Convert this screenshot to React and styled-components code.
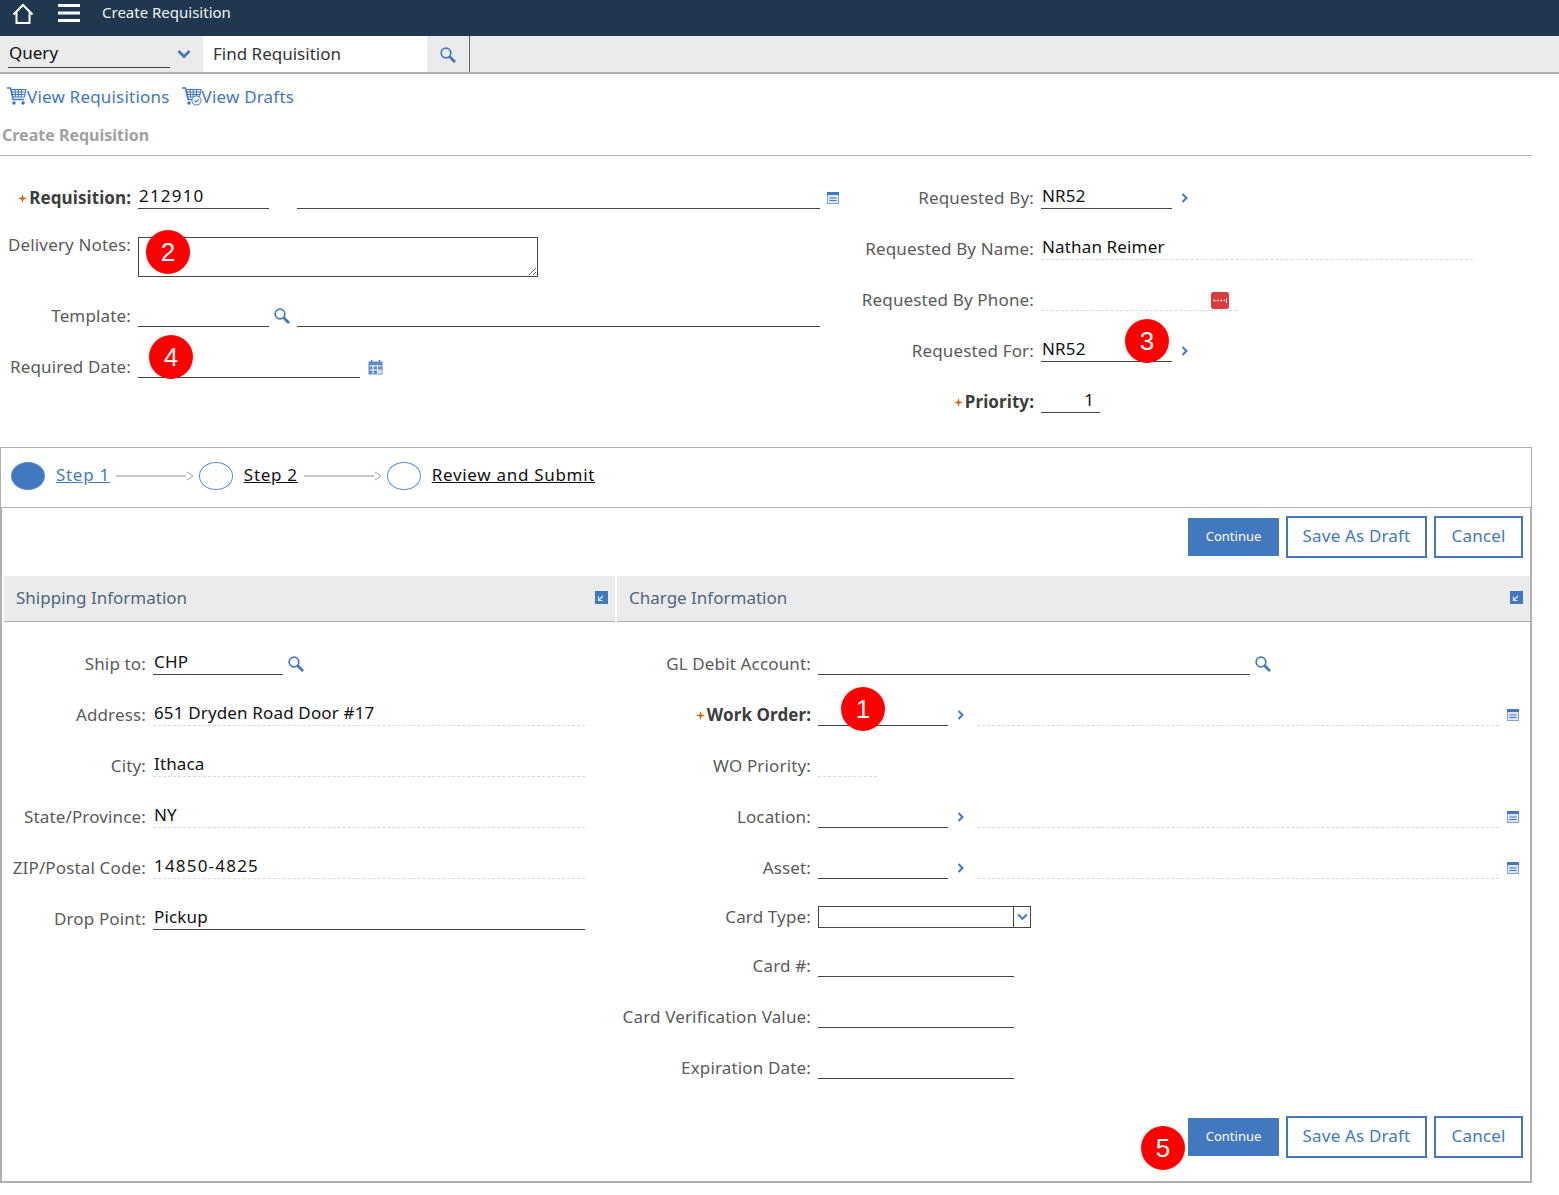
import styled, { createGlobalStyle } from "styled-components";

const BLUE = "#4178be";
const GRAY_LINE = "#b0b0b0";
const INK = "#444";

const GlobalStyle = createGlobalStyle`
  html, body {
    margin: 0;
    padding: 0;
    background: #fff;
  }
  body {
    font-family: "Noto Sans", "Liberation Sans", sans-serif;
    font-size: 17px;
    color: #5a5a5a;
  }
  * {
    box-sizing: border-box;
  }
`;

function SearchIcon() {
  return (
    <svg width="16" height="16" viewBox="0 0 16 16">
      <circle cx="6" cy="6" r="4.8" fill="none" stroke={BLUE} strokeWidth="1.7" />
      <path d="M10 10 L14.2 14.2" stroke={BLUE} strokeWidth="2.8" strokeLinecap="round" />
    </svg>
  );
}

function ChevronRight() {
  return (
    <svg width="8" height="10" viewBox="0 0 8 10">
      <path d="M1.5 1 L5.5 5 L1.5 9" fill="none" stroke={BLUE} strokeWidth="2" />
    </svg>
  );
}

function ChevronDown({ size = 14 }) {
  return (
    <svg width={size} height={size * 0.72} viewBox="0 0 14 10">
      <path d="M1.5 2 L7 7.5 L12.5 2" fill="none" stroke={BLUE} strokeWidth="2.6" />
    </svg>
  );
}

function DetailIcon() {
  return (
    <svg width="12" height="12" viewBox="0 0 12 12">
      <rect x="0.5" y="0.5" width="11" height="11" fill="#dbe6f5" stroke="#7fa3d6" />
      <rect x="0" y="0" width="12" height="3" fill={BLUE} />
      <path d="M2.5 6 H9.5 M2.5 8.5 H9.5" stroke={BLUE} strokeWidth="1" />
    </svg>
  );
}

function CollapseIcon() {
  return (
    <svg width="13" height="13" viewBox="0 0 13 13">
      <rect width="13" height="13" fill={BLUE} />
      <path d="M8 5 L4 9 M3.5 5.5 V9.5 H7.5" fill="none" stroke="#dfe9f6" strokeWidth="1.2" />
    </svg>
  );
}

function CalendarIcon() {
  return (
    <svg width="15" height="15" viewBox="0 0 15 15">
      <path d="M3.5 0 V3 M11.5 0 V3" stroke={BLUE} strokeWidth="1.6" />
      <rect x="0.5" y="1.5" width="14" height="13" fill="#5b8bc9" />
      <path d="M1.5 6 H13.5 M1.5 10 H13.5 M5 5 V14 M9.5 5 V14" stroke="#fff" strokeWidth="1" />
      <circle cx="12" cy="12" r="2" fill="#dbe6f5" />
    </svg>
  );
}

function PhoneIcon() {
  return (
    <svg width="18" height="17" viewBox="0 0 18 17">
      <rect width="18" height="17" rx="2.5" fill="#da3c3c" />
      <path d="M2.5 8.5 H4.3 M5.9 8.5 H7.7 M9.3 8.5 H11.1 M12.7 8.5 H14" stroke="#fff" strokeWidth="1.6" />
      <path d="M15.5 6 V11" stroke="#fff" strokeWidth="1" />
    </svg>
  );
}

function CartIcon({ checked }) {
  return (
    <svg width="20" height="20" viewBox="0 0 20 20">
      <path d="M0 2 H3.4 L6 13.5 H17" fill="none" stroke={BLUE} strokeWidth="1.4" />
      <path
        d="M4.4 3.5 H19 L17.4 11 H6 Z M4.8 6 H18.4 M5.4 8.5 H18 M8 3.5 L8.6 11 M11.2 3.5 V11 M14.6 3.5 L14.2 11"
        fill="none"
        stroke={BLUE}
        strokeWidth="1.1"
      />
      <circle cx="7" cy="17" r="1.8" fill={BLUE} />
      <circle cx="16" cy="17" r="1.8" fill={BLUE} />
      {checked && (
        <>
          <circle cx="14.5" cy="14.5" r="4.6" fill="#fff" stroke={BLUE} strokeWidth="1" />
          <path d="M12.5 14.5 L14 16 L16.8 13" fill="none" stroke={BLUE} strokeWidth="1.1" />
        </>
      )}
    </svg>
  );
}

function HomeIcon() {
  return (
    <svg width="22" height="22" viewBox="0 0 22 22">
      <path
        d="M1.5 11.5 L11 2 L20.5 11.5 M4.5 9.5 V20 H17.5 V9.5"
        fill="none"
        stroke="#fff"
        strokeWidth="2"
      />
    </svg>
  );
}

function MenuIcon() {
  return (
    <svg width="22" height="18" viewBox="0 0 22 18">
      <path d="M0 1.5 H22 M0 9 H22 M0 16.5 H22" stroke="#fff" strokeWidth="3" />
    </svg>
  );
}

function RequiredStar() {
  return (
    <StarMark width="9" height="9" viewBox="0 0 8 8">
      <path d="M4 0 L4.9 3.1 L8 4 L4.9 4.9 L4 8 L3.1 4.9 L0 4 L3.1 3.1 Z" fill="#e8590c" />
    </StarMark>
  );
}

function FormLabel({ children, width, required, raised }) {
  return (
    <Label $width={width} $required={required} $raised={raised}>
      {required && <RequiredStar />}
      {children}:
    </Label>
  );
}

function StepBar() {
  return (
    <Steps>
      <StepDot $active />
      <StepLink $active>Step 1</StepLink>
      <StepArrow />
      <StepDot />
      <StepLink>Step 2</StepLink>
      <StepArrow />
      <StepDot />
      <StepLink>Review and Submit</StepLink>
    </Steps>
  );
}

function StepArrow() {
  return (
    <svg width="78" height="10" viewBox="0 0 78 10">
      <path d="M0 5 H70" stroke="#8d8d8d" strokeWidth="1" />
      <path d="M71 1 L77 5 L71 9" fill="none" stroke="#a89f96" strokeWidth="1" />
    </svg>
  );
}

function ActionButtons() {
  return (
    <>
      <PrimaryButton>Continue</PrimaryButton>
      <OutlineButton $width={141}>Save As Draft</OutlineButton>
      <OutlineButton $width={89}>Cancel</OutlineButton>
    </>
  );
}

const TOP_LEFT = 131;
const TOP_RIGHT = 184;
const SHIP = 142;
const CHARGE = 194;

export default function App() {
  return (
    <Page>
      <GlobalStyle />
      <TopBar>
        <HomeButton>
          <HomeIcon />
        </HomeButton>
        <MenuButton>
          <MenuIcon />
        </MenuButton>
        <TopTitle>Create Requisition</TopTitle>
      </TopBar>

      <QueryBar>
        <QuerySelect>Query</QuerySelect>
        <QueryChevron>
          <ChevronDown />
        </QueryChevron>
        <FindInput>Find Requisition</FindInput>
        <FindButton>
          <SearchIcon />
        </FindButton>
      </QueryBar>

      <LinkRow>
        <NavLink>
          <CartIcon />
          View Requisitions
        </NavLink>
        <NavLink>
          <CartIcon checked />
          View Drafts
        </NavLink>
      </LinkRow>

      <PageHeading>Create Requisition</PageHeading>

      <TopForm>
        <div>
          <Row>
            <FormLabel width={TOP_LEFT} required>Requisition</FormLabel>
            <Field $width={131} $numeric>212910</Field>
            <Field $width={523} $gap={28} />
            <IconSlot $gap={7}>
              <DetailIcon />
            </IconSlot>
          </Row>
          <Row $height={67} $pad={13}>
            <FormLabel width={TOP_LEFT} raised>Delivery Notes</FormLabel>
            <NotesWrap>
              <Notes readOnly />
              <Badge $left={8} $top={-7}>2</Badge>
            </NotesWrap>
          </Row>
          <Row>
            <FormLabel width={TOP_LEFT}>Template</FormLabel>
            <Field $width={131} />
            <IconSlot $gap={5}>
              <SearchIcon />
            </IconSlot>
            <Field $width={523} $gap={7} />
          </Row>
          <Row>
            <FormLabel width={TOP_LEFT}>Required Date</FormLabel>
            <Field $width={222}>
              <Badge $left={11} $top={-17}>4</Badge>
            </Field>
            <IconSlot $gap={8}>
              <CalendarIcon />
            </IconSlot>
          </Row>
        </div>
        <div>
          <Row>
            <FormLabel width={TOP_RIGHT}>Requested By</FormLabel>
            <Field $width={131}>NR52</Field>
            <IconSlot $gap={9}>
              <ChevronRight />
            </IconSlot>
          </Row>
          <Row>
            <FormLabel width={TOP_RIGHT}>Requested By Name</FormLabel>
            <Field $width={432} $readOnly>Nathan Reimer</Field>
          </Row>
          <Row>
            <FormLabel width={TOP_RIGHT}>Requested By Phone</FormLabel>
            <Field $width={196} $readOnly>
              <PhoneSlot>
                <PhoneIcon />
              </PhoneSlot>
            </Field>
          </Row>
          <Row>
            <FormLabel width={TOP_RIGHT}>Requested For</FormLabel>
            <Field $width={131}>
              NR52
              <Badge $left={84} $top={-17}>3</Badge>
            </Field>
            <IconSlot $gap={9}>
              <ChevronRight />
            </IconSlot>
          </Row>
          <Row>
            <FormLabel width={TOP_RIGHT} required>Priority</FormLabel>
            <Field $width={59} $alignRight>1</Field>
          </Row>
        </div>
      </TopForm>

      <StepBar />

      <Panel>
        <Toolbar $top={8} $bottom={18}>
          <ActionButtons />
        </Toolbar>

        <Sections>
          <section>
            <SectionHeader>
              <SectionTitle>Shipping Information</SectionTitle>
              <CollapseIcon />
            </SectionHeader>
            <SectionBody>
              <Row>
                <FormLabel width={SHIP}>Ship to</FormLabel>
                <Field $width={130}>CHP</Field>
                <IconSlot $gap={5}>
                  <SearchIcon />
                </IconSlot>
              </Row>
              <Row>
                <FormLabel width={SHIP}>Address</FormLabel>
                <Field $width={432} $readOnly>651 Dryden Road Door #17</Field>
              </Row>
              <Row>
                <FormLabel width={SHIP}>City</FormLabel>
                <Field $width={432} $readOnly>Ithaca</Field>
              </Row>
              <Row>
                <FormLabel width={SHIP}>State/Province</FormLabel>
                <Field $width={432} $readOnly>NY</Field>
              </Row>
              <Row>
                <FormLabel width={SHIP}>ZIP/Postal Code</FormLabel>
                <Field $width={432} $readOnly $numeric>14850-4825</Field>
              </Row>
              <Row>
                <FormLabel width={SHIP}>Drop Point</FormLabel>
                <Field $width={432}>Pickup</Field>
              </Row>
            </SectionBody>
          </section>

          <section>
            <SectionHeader>
              <SectionTitle>Charge Information</SectionTitle>
              <CollapseIcon />
            </SectionHeader>
            <SectionBody>
              <Row>
                <FormLabel width={CHARGE}>GL Debit Account</FormLabel>
                <Field $width={432} />
                <IconSlot $gap={5}>
                  <SearchIcon />
                </IconSlot>
              </Row>
              <Row>
                <FormLabel width={CHARGE} required>Work Order</FormLabel>
                <Field $width={130}>
                  <Badge $left={23} $top={-13}>1</Badge>
                </Field>
                <IconSlot $gap={9}>
                  <ChevronRight />
                </IconSlot>
                <Field $width={522} $readOnly $gap={12} />
                <IconSlot $gap={8}>
                  <DetailIcon />
                </IconSlot>
              </Row>
              <Row>
                <FormLabel width={CHARGE}>WO Priority</FormLabel>
                <Field $width={59} $readOnly />
              </Row>
              <Row>
                <FormLabel width={CHARGE}>Location</FormLabel>
                <Field $width={130} />
                <IconSlot $gap={9}>
                  <ChevronRight />
                </IconSlot>
                <Field $width={522} $readOnly $gap={12} />
                <IconSlot $gap={8}>
                  <DetailIcon />
                </IconSlot>
              </Row>
              <Row>
                <FormLabel width={CHARGE}>Asset</FormLabel>
                <Field $width={130} />
                <IconSlot $gap={9}>
                  <ChevronRight />
                </IconSlot>
                <Field $width={522} $readOnly $gap={12} />
                <IconSlot $gap={8}>
                  <DetailIcon />
                </IconSlot>
              </Row>
              <Row $height={47} $pad={8}>
                <FormLabel width={CHARGE}>Card Type</FormLabel>
                <SelectBox>
                  <SelectArrow>
                    <ChevronDown size={11} />
                  </SelectArrow>
                </SelectBox>
              </Row>
              <Row>
                <FormLabel width={CHARGE}>Card #</FormLabel>
                <Field $width={196} />
              </Row>
              <Row>
                <FormLabel width={CHARGE}>Card Verification Value</FormLabel>
                <Field $width={196} />
              </Row>
              <Row>
                <FormLabel width={CHARGE}>Expiration Date</FormLabel>
                <Field $width={196} />
              </Row>
            </SectionBody>
          </section>
        </Sections>

        <Toolbar $top={22} $bottom={23}>
          <Badge $right={345} $top={32}>5</Badge>
          <ActionButtons />
        </Toolbar>
      </Panel>
    </Page>
  );
}

const Page = styled.div`
  width: 1559px;
  height: 1195px;
  overflow: hidden;
`;

const TopBar = styled.header`
  height: 36px;
  background: #1f384f;
  display: flex;
  align-items: flex-start;
`;

const HomeButton = styled.div`
  margin: 3px 0 0 12px;
  height: 22px;
`;

const MenuButton = styled.div`
  margin: 4px 0 0 24px;
  height: 18px;
`;

const TopTitle = styled.div`
  margin-left: 22px;
  color: #f2f4f6;
  font-size: 15px;
  line-height: 25px;
`;

const QueryBar = styled.div`
  height: 38px;
  background: #ebebeb;
  border-bottom: 2px solid ${GRAY_LINE};
  display: flex;
  align-items: stretch;
  padding-left: 8px;
`;

const QuerySelect = styled.div`
  width: 162px;
  height: 32px;
  border-bottom: 1px solid ${INK};
  color: #111;
  padding-left: 1px;
  line-height: 33px;
`;

const QueryChevron = styled.div`
  width: 33px;
  display: flex;
  align-items: center;
  padding: 1px 0 0 7px;
`;

const FindInput = styled.div`
  width: 224px;
  background: #fff;
  color: #333;
  padding-left: 10px;
  line-height: 36px;
`;

const FindButton = styled.div`
  width: 43px;
  border-right: 1px solid #666;
  display: flex;
  align-items: center;
  padding: 1px 0 0 13px;
`;

const LinkRow = styled.nav`
  display: flex;
  gap: 12px;
  height: 46px;
  padding: 10px 0 0 7px;
`;

const NavLink = styled.a`
  display: flex;
  align-items: center;
  height: 24px;
  color: ${BLUE};
  letter-spacing: 0.2px;
`;

const PageHeading = styled.h1`
  margin: 0;
  height: 36px;
  width: 1532px;
  padding-left: 2px;
  border-bottom: 1px solid ${GRAY_LINE};
  color: #a0a0a0;
  font-size: 16px;
  font-weight: 700;
  line-height: 30px;
`;

const TopForm = styled.div`
  display: grid;
  grid-template-columns: 850px 1fr;
  height: 291px;
  padding-top: 17px;
`;

const Row = styled.div`
  display: flex;
  align-items: flex-start;
  height: ${({ $height }) => $height || 51}px;
  padding-top: ${({ $pad }) => $pad || 10}px;
`;

const Label = styled.label`
  width: ${({ $width }) => $width}px;
  margin: ${({ $raised }) => ($raised ? -5 : 2)}px 7px 0 0;
  flex: none;
  display: flex;
  align-items: center;
  justify-content: flex-end;
  line-height: 26px;
  white-space: nowrap;
  letter-spacing: ${({ $required }) => ($required ? 0.08 : 0.15)}px;
  color: ${({ $required }) => ($required ? "#3d3d3d" : "#5a5a5a")};
  font-weight: ${({ $required }) => ($required ? 700 : 400)};
`;

const StarMark = styled.svg`
  margin-right: 2px;
`;

const Field = styled.div`
  position: relative;
  flex: none;
  width: ${({ $width }) => $width}px;
  height: 26px;
  margin-left: ${({ $gap }) => $gap || 0}px;
  padding: 0 ${({ $alignRight }) => ($alignRight ? 6 : 1)}px 0 1px;
  border-bottom: 1px ${({ $readOnly }) => ($readOnly ? "dashed #d8d8d8" : `solid ${INK}`)};
  color: #111;
  line-height: 25px;
  letter-spacing: ${({ $numeric }) => ($numeric ? 1.2 : 0.15)}px;
  text-align: ${({ $alignRight }) => ($alignRight ? "right" : "left")};
`;

const IconSlot = styled.div`
  flex: none;
  display: flex;
  align-items: center;
  height: 30px;
  margin-left: ${({ $gap }) => $gap}px;
`;

const PhoneSlot = styled.div`
  position: absolute;
  right: 8px;
  top: 7px;
  line-height: 0;
`;

const NotesWrap = styled.div`
  position: relative;
  height: 40px;
`;

const Notes = styled.textarea`
  display: block;
  width: 400px;
  height: 40px;
  margin: 0;
  padding: 0;
  border: 1px solid ${INK};
  border-radius: 0;
  outline: none;
  background: #fff;
`;

const Badge = styled.span`
  position: absolute;
  left: ${({ $left }) => ($left === undefined ? "auto" : `${$left}px`)};
  right: ${({ $right }) => ($right === undefined ? "auto" : `${$right}px`)};
  top: ${({ $top }) => $top}px;
  width: 44px;
  height: 44px;
  border-radius: 50%;
  background: #f00;
  color: #fff;
  font-family: "Liberation Sans", Arial, sans-serif;
  font-size: 26px;
  line-height: 44px;
  letter-spacing: 0;
  text-align: center;
  z-index: 2;
`;

const Steps = styled.div`
  width: 1532px;
  height: 61px;
  border: 1px solid ${GRAY_LINE};
  display: flex;
  align-items: center;
  padding: 0 0 4px 10px;
`;

const StepDot = styled.span`
  flex: none;
  width: 34px;
  height: 28px;
  margin-left: 5px;
  border-radius: 50%;
  border: 1px solid #5a8fd0;
  background: ${({ $active }) => ($active ? BLUE : "#fff")};

  &:first-child {
    margin-left: 0;
  }
`;

const StepLink = styled.a`
  margin: -3px 6px 0 11px;
  text-decoration: underline;
  letter-spacing: 0.7px;
  color: ${({ $active }) => ($active ? BLUE : "#111")};
`;

const Panel = styled.div`
  position: relative;
  width: 1532px;
  height: 676px;
  margin-top: -1px;
  border: 2px solid ${GRAY_LINE};
  border-top: 1px solid ${GRAY_LINE};
`;

const Toolbar = styled.div`
  position: relative;
  display: flex;
  align-items: center;
  justify-content: flex-end;
  gap: 7px;
  padding: ${({ $top }) => $top}px 7px ${({ $bottom }) => $bottom}px 0;
`;

const PrimaryButton = styled.button`
  width: 91px;
  height: 38px;
  padding: 0 0 2px;
  border: none;
  background: ${BLUE};
  color: #fff;
  font-family: inherit;
  font-size: 13px;
`;

const OutlineButton = styled.button`
  width: ${({ $width }) => $width}px;
  height: 42px;
  padding: 0 0 3px;
  border: 2px solid ${BLUE};
  background: #fff;
  color: ${BLUE};
  font-family: inherit;
  font-size: 17px;
  letter-spacing: 0.17px;
`;

const Sections = styled.div`
  display: grid;
  grid-template-columns: 611px 913px;
  gap: 2px;
  padding-left: 2px;
`;

const SectionHeader = styled.div`
  height: 46px;
  background: #ebebeb;
  border-bottom: 1px solid ${GRAY_LINE};
  display: flex;
  align-items: center;
  justify-content: space-between;
  padding: 0 7px 3px 12px;
`;

const SectionTitle = styled.h2`
  margin: 0;
  color: #4f677c;
  font-size: 17px;
  font-weight: 400;
`;

const SectionBody = styled.div`
  padding-top: 17px;
`;

const SelectBox = styled.div`
  position: relative;
  width: 213px;
  height: 22px;
  margin-top: 4px;
  border: 1px solid ${INK};
`;

const SelectArrow = styled.span`
  position: absolute;
  right: 0;
  top: 0;
  width: 17px;
  height: 20px;
  border-left: 1px solid ${INK};
  display: flex;
  align-items: center;
  justify-content: center;
`;
